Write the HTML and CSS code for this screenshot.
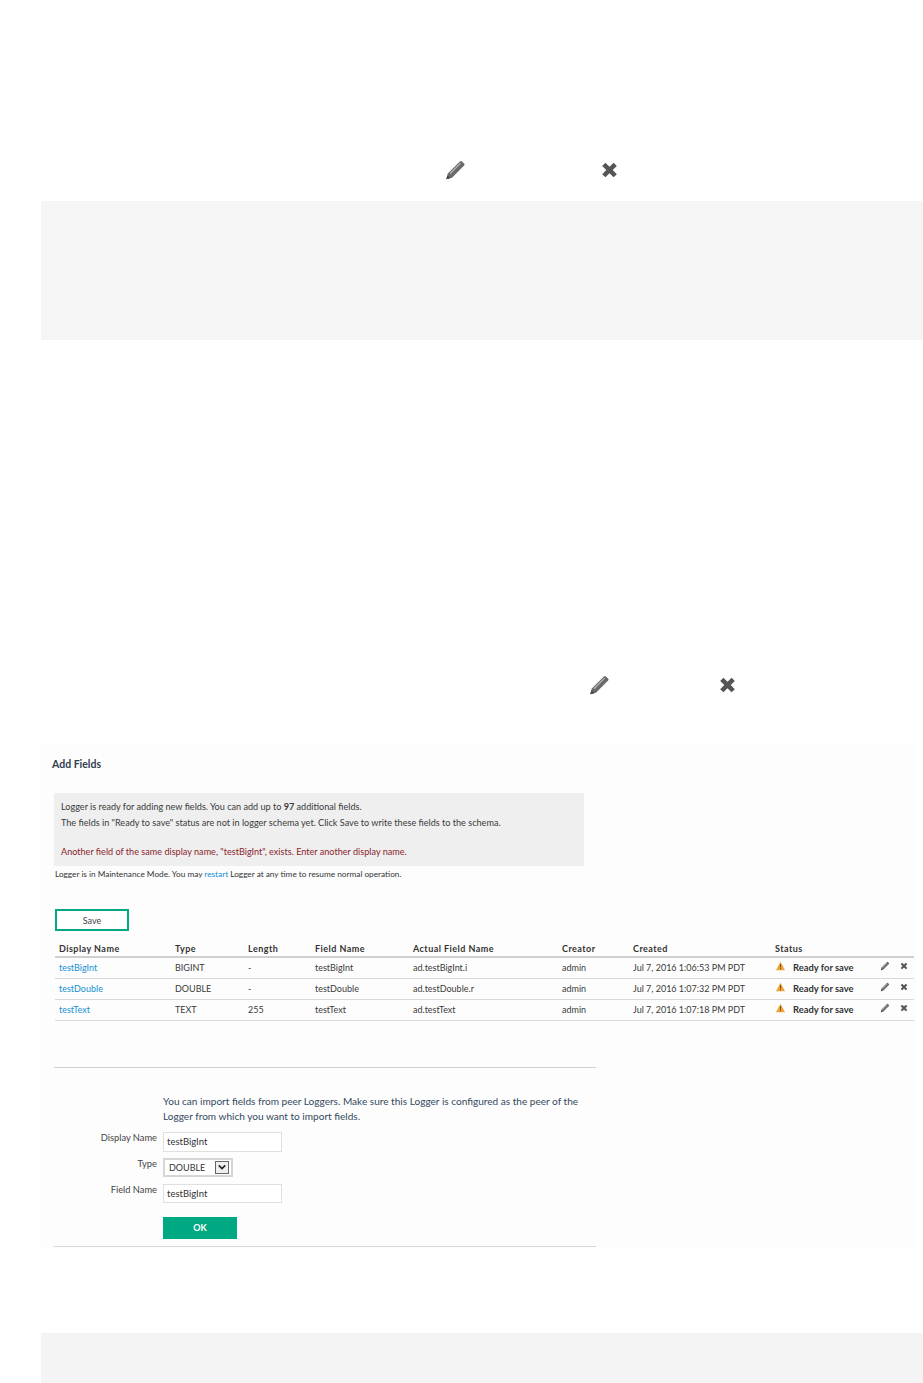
FILE: index.html
```html
<!DOCTYPE html>
<html lang="en">
<head>
<meta charset="utf-8">
<title>Add Fields</title>
<link rel="stylesheet" href="styles.css">
</head>
<body>
<svg class="defs" width="0" height="0" aria-hidden="true">
  <symbol id="pencil" viewBox="0 0 24 24">
    <path d="M2 22l1.600-6.200L16.800 2.600a1.600 1.600 0 0 1 2.200 0l2.400 2.400a1.600 1.600 0 0 1 0 2.200L8.200 20.400z" fill="#6a6a6a"/>
    <path d="M5.500 15.500L17 4l1 1L6.500 16.500z" fill="#b5b5b5"/>
    <path d="M2 22l1.100-4.300 3.200 3.200z" fill="#444"/>
  </symbol>
  <symbol id="cross" viewBox="0 0 24 24">
    <path d="M7.500 4L12 8.500 16.500 4l3.500 3.500L15.500 12l4.500 4.500-3.500 3.500L12 15.500 7.500 20 4 16.500 8.500 12 4 7.500z" fill="#555"/>
  </symbol>
  <symbol id="warn" viewBox="0 0 24 24">
    <path d="M12 2L23 22H1z" fill="#f0a53a"/>
    <path d="M10.800 8h2.400l-.4 8h-1.600zM10.800 17.500h2.400V20h-2.400z" fill="#5a3a10"/>
  </symbol>
</svg>

<div class="icons-top">
  <svg class="icon-lg"><use href="#pencil"/></svg>
  <svg class="icon-lg gap-top"><use href="#cross"/></svg>
</div>
<div class="band"></div>
<div class="icons-mid">
  <svg class="icon-lg"><use href="#pencil"/></svg>
  <svg class="icon-lg gap-mid"><use href="#cross"/></svg>
</div>

<main class="panel">
  <h2 class="title">Add Fields</h2>
  <div class="info">
    <p>Logger is ready for adding new fields. You can add up to <b>97</b> additional fields.</p>
    <p>The fields in "Ready to save" status are not in logger schema yet. Click Save to write these fields to the schema.</p>
    <p class="error">Another field of the same display name, "testBigInt", exists. Enter another display name.</p>
  </div>
  <p class="note">Logger is in Maintenance Mode. You may <a href="#">restart</a> Logger at any time to resume normal operation.</p>
  <button class="save" type="button">Save</button>
  <table class="fields">
    <thead>
      <tr>
        <th class="c1">Display Name</th><th class="c2">Type</th><th class="c3">Length</th><th class="c4">Field Name</th>
        <th class="c5">Actual Field Name</th><th class="c6">Creator</th><th class="c7">Created</th><th class="c8">Status</th><th></th>
      </tr>
    </thead>
    <tbody>
      <tr>
        <td><a href="#">testBigInt</a></td><td>BIGINT</td><td>-</td><td>testBigInt</td><td>ad.testBigInt.i</td><td>admin</td><td>Jul 7, 2016 1:06:53 PM PDT</td>
        <td><span class="status"><svg class="icon-warn"><use href="#warn"/></svg>Ready for save</span></td>
        <td><span class="acts"><svg class="icon-sm"><use href="#pencil"/></svg><svg class="icon-sm"><use href="#cross"/></svg></span></td>
      </tr>
      <tr>
        <td><a href="#">testDouble</a></td><td>DOUBLE</td><td>-</td><td>testDouble</td><td>ad.testDouble.r</td><td>admin</td><td>Jul 7, 2016 1:07:32 PM PDT</td>
        <td><span class="status"><svg class="icon-warn"><use href="#warn"/></svg>Ready for save</span></td>
        <td><span class="acts"><svg class="icon-sm"><use href="#pencil"/></svg><svg class="icon-sm"><use href="#cross"/></svg></span></td>
      </tr>
      <tr>
        <td><a href="#">testText</a></td><td>TEXT</td><td>255</td><td>testText</td><td>ad.testText</td><td>admin</td><td>Jul 7, 2016 1:07:18 PM PDT</td>
        <td><span class="status"><svg class="icon-warn"><use href="#warn"/></svg>Ready for save</span></td>
        <td><span class="acts"><svg class="icon-sm"><use href="#pencil"/></svg><svg class="icon-sm"><use href="#cross"/></svg></span></td>
      </tr>
    </tbody>
  </table>
  <form class="import">
    <div class="form-grid">
      <p class="lead">You can import fields from peer Loggers. Make sure this Logger is configured as the peer of the Logger from which you want to import fields.</p>
      <label class="l-name">Display Name</label><input class="text-in r-name" type="text" value="testBigInt">
      <label class="l-type">Type</label>
      <span class="select-wrap r-type"><span class="select-val">DOUBLE</span><span class="select-btn"><svg viewBox="0 0 10 10" width="8" height="8"><path d="M1 3l4 4 4-4" fill="none" stroke="#222" stroke-width="2"/></svg></span></span>
      <label class="l-field">Field Name</label><input class="text-in r-field" type="text" value="testBigInt">
      <button class="ok" type="button">OK</button>
    </div>
  </form>
</main>
<div class="footer-band"></div>
</body>
</html>
```
FILE: styles.css
```css
* { box-sizing: border-box; }
html, body { margin: 0; padding: 0; }
body {
  background: #fff;
  width: 923px;
  height: 1383px;
  overflow: hidden;
  font-family: "Lato", "Liberation Sans", sans-serif;
  font-size: 9px;
  color: #3a3a3a;
}
.defs { position: absolute; }
p { margin: 0; }
a { color: #1590d4; text-decoration: none; }

.icons-top { display: flex; align-items: center; height: 22px; margin-top: 159px; padding-left: 444px; }
.gap-top { margin-left: 131px; }
.icon-lg { width: 23px; height: 22px; }
.band { margin: 20px 0 0 41px; height: 139px; background: #f5f5f5; }
.icons-mid { display: flex; align-items: center; height: 22px; margin-top: 334px; padding-left: 588px; }
.gap-mid { margin-left: 105px; }

.panel { margin: 48px 6px 0 41px; height: 504px; background: #fdfdfd; padding: 14px 3px 0 13px; }
.title { margin: 0 0 0 -2px; font-size: 10.500px; line-height: 12px; font-weight: 700; color: #2f4050; }
.info { width: 530px; height: 73px; margin-top: 23px; padding: 8px 7px 0; background: #efefef; font-size: 9.100px; }
.info p { line-height: 12px; margin-bottom: 4px; }
.info .error { margin-top: 17px; color: #8a1f2d; }
.note { margin: 2px 0 0 1px; line-height: 12px; font-size: 8.250px; color: #333; }
.save { display: block; width: 74px; height: 22px; margin: 29px 0 0 1px; padding: 0; background: #fff; border: 2px solid #01a982; font: inherit; color: #444; }

.fields { width: 859px; margin: 11px 0 0 1px; border-collapse: collapse; table-layout: fixed; }
.fields th { height: 15px; padding: 0 0 2px 4px; line-height: 11px; font-weight: 700; letter-spacing: .45px; color: #333; text-align: left; border-bottom: 2px solid #d0d0d0; }
.fields td { height: 21px; padding: 0 0 1px 4px; border-bottom: 1px solid #d8d8d8; white-space: nowrap; }
.c1 { width: 116px; } .c2 { width: 73px; } .c3 { width: 67px; } .c4 { width: 98px; }
.c5 { width: 149px; } .c6 { width: 71px; } .c7 { width: 142px; } .c8 { width: 96px; }
.status { display: flex; align-items: center; font-weight: 700; font-size: 9.400px; color: #333; }
.icon-warn { width: 11px; height: 10px; margin: 0 7px 2px 0; }
.acts { display: flex; align-items: center; gap: 9px; margin-left: 9px; }
.icon-sm { width: 10px; height: 10px; margin-bottom: 2px; }

.import { width: 542px; height: 180px; margin: 46px 0 0 0; border-top: 1px solid #d0d0d0; border-bottom: 1px solid #d8d8d8; }
.form-grid { display: grid; grid-template-columns: 103px 1fr; column-gap: 6px; padding-top: 26px; align-items: start; }
.lead { grid-column: 2; line-height: 15px; padding-right: 14px; font-size: 10.070px; color: #34495e; }
.form-grid label { grid-column: 1; text-align: right; line-height: 12px; font-size: 9.300px; color: #444; }
.text-in { grid-column: 2; display: block; width: 119px; height: 20px; padding: 0 3px; border: 1px solid #e0e0e0; background: #fff; font: inherit; font-size: 9.500px; color: #333; }
.l-name { grid-row: 2; }
.r-name { grid-row: 2; }
.l-type { grid-row: 3; margin-top: 6px; }
.r-type { grid-row: 3; }
.l-field { grid-row: 4; margin-top: 0; }
.r-field { grid-row: 4; height: 19px; }
.form-grid > .lead { margin-bottom: 8px; }
.select-wrap { grid-column: 2; display: flex; align-items: center; justify-content: space-between; width: 70px; height: 19px; margin: 6px 0 7px; padding: 0 2px 0 4px; background: #fff; border: 2px solid #d6d6d6; font-size: 9px; color: #333; }
.select-btn { display: flex; align-items: center; justify-content: center; width: 14px; height: 13px; background: #eee; border: 1px solid #666; }
.ok { grid-column: 2; grid-row: 5; width: 74px; height: 22px; margin-top: 14px; padding: 0; background: #01a982; border: 0; color: #fff; font: inherit; font-weight: 700; }

.footer-band { margin: 85px 0 0 41px; height: 51px; background: #f4f4f4; }
```
